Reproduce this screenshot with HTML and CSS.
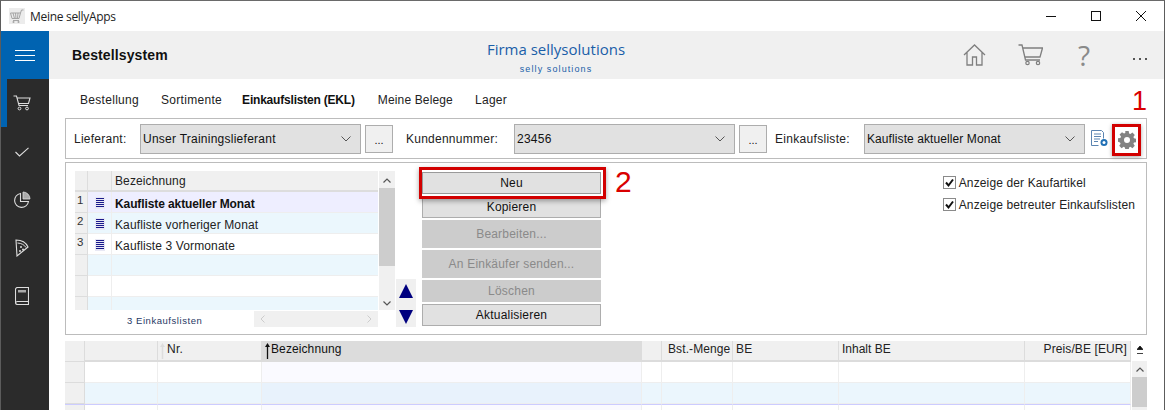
FILE: index.html
```html
<!DOCTYPE html>
<html lang="de">
<head>
<meta charset="utf-8">
<title>Meine sellyApps</title>
<link rel="stylesheet" href="styles.css">
</head>
<body>
<div class="window">
  <div class="titlebar">
    <svg class="app-icon" width="16" height="16" viewBox="0 0 16 16"><rect width="16" height="16" fill="#ececec"/><path d="M1.500 5h10l-1.500 5.500h-7zM11.500 5l1-3h2M4 12.500h6M4 5l1.500 5.500M6.500 5l.5 5.500M9 5l-.5 5.500" fill="none" stroke="#a5a5a5"/><circle cx="4.500" cy="14" r="1" fill="#a5a5a5"/><circle cx="9.500" cy="14" r="1" fill="#a5a5a5"/></svg>
    <span class="app-title">Meine sellyApps</span>
    <div class="win-controls">
      <svg width="12" height="12" viewBox="0 0 12 12"><path d="M1 6.500h10" stroke="#111" fill="none"/></svg>
      <svg width="12" height="12" viewBox="0 0 12 12"><rect x="1.500" y="1.500" width="9" height="9" stroke="#111" fill="none"/></svg>
      <svg width="12" height="12" viewBox="0 0 12 12"><path d="M1 1l10 10M11 1L1 11" stroke="#111" fill="none"/></svg>
    </div>
  </div>
  <div class="app">
    <nav class="sidebar">
      <div class="burger"><span></span><span></span><span></span></div>
      <div class="side-item active"><svg width="18" height="16" viewBox="0 0 18 16"><path d="M.5 1H3.500L6 10.500h9M4 3h13l-1.500 5.500H5.500" fill="none" stroke="#ddd" stroke-width="1.100"/><circle cx="6.500" cy="13.500" r="1.400" fill="none" stroke="#ddd"/><circle cx="14" cy="13.500" r="1.400" fill="none" stroke="#ddd"/></svg></div>
      <div class="side-item"><svg width="14" height="10" viewBox="0 0 14 10"><path d="M.5 5l4 4L13.500.8" fill="none" stroke="#ddd" stroke-width="1.100"/></svg></div>
      <div class="side-item"><svg width="18" height="18" viewBox="0 0 18 18"><path d="M7.500 2.500a7 7 0 1 0 8 8H7.500z" fill="none" stroke="#ddd" stroke-width="1.100"/><path d="M10 1a7 7 0 0 1 7 7h-7z" fill="#aaa" stroke="#ddd" stroke-width=".8"/></svg></div>
      <div class="side-item"><svg width="14" height="18" viewBox="0 0 14 18"><path d="M1 1c5 0 10 2.500 12 7L2 17z" fill="none" stroke="#ddd" stroke-width="1.100"/><path d="M2.500 4c4 .2 7 2 8.500 4.500" fill="none" stroke="#ddd"/><circle cx="6" cy="8" r="1" fill="#ddd"/><circle cx="5" cy="12" r="1" fill="#ddd"/><circle cx="8" cy="10.500" r="1" fill="#ddd"/></svg></div>
      <div class="side-item"><svg width="14" height="18" viewBox="0 0 14 18"><path d="M2.500.5h11v14h-11a2 2 0 0 0-2 1.500V2.500a2 2 0 0 1 2-2zM.5 15.500a2 2 0 0 0 2 2h11v-3" fill="none" stroke="#ddd" stroke-width="1.100"/><rect x="3" y="3" width="8" height="2.500" fill="#aaa"/></svg></div>
    </nav>
    <main class="main">
      <header class="header">
        <div class="h-title">Bestellsystem</div>
        <div class="h-brand"><div class="brand-main">Firma sellysolutions</div><div class="brand-sub">selly solutions</div></div>
        <div class="h-icons">
          <svg width="23" height="22" viewBox="0 0 23 22"><path d="M1 11L11.500 1 22 11M4 8.500V21h5.500v-8h4v8H19V8.500" fill="none" stroke="#7f7f7f" stroke-width="1.300"/></svg>
          <svg width="25" height="22" viewBox="0 0 25 22"><path d="M.5 1H4L7.500 16H22M5 4h19.500l-2.500 9H7" fill="none" stroke="#7f7f7f" stroke-width="1.300"/><circle cx="9.500" cy="19" r="1.700" fill="none" stroke="#7f7f7f" stroke-width="1.200"/><circle cx="20" cy="19" r="1.700" fill="none" stroke="#7f7f7f" stroke-width="1.200"/></svg>
          <span class="help">?</span>
          <span class="more"><i></i><i></i><i></i></span>
        </div>
      </header>
      <div class="tabs">
        <span class="tab">Bestellung</span>
        <span class="tab">Sortimente</span>
        <span class="tab current">Einkaufslisten (EKL)</span>
        <span class="tab belege">Meine Belege</span>
        <span class="tab">Lager</span>
        <span class="mark mark-1">1</span>
      </div>
      <section class="toolbar">
        <label class="lbl lbl-a">Lieferant:</label>
        <div class="combo"><span>Unser Trainingslieferant</span><svg width="10" height="6" viewBox="0 0 10 6"><path d="M.5.500L5 5 9.500.500" fill="none" stroke="#555"/></svg></div>
        <div class="dots">...</div>
        <label class="lbl lbl-b">Kundennummer:</label>
        <div class="combo"><span>23456</span><svg width="10" height="6" viewBox="0 0 10 6"><path d="M.5.500L5 5 9.500.500" fill="none" stroke="#555"/></svg></div>
        <div class="dots">...</div>
        <label class="lbl lbl-c">Einkaufsliste:</label>
        <div class="combo tight"><span>Kaufliste aktueller Monat</span><svg width="10" height="6" viewBox="0 0 10 6"><path d="M.5.500L5 5 9.500.500" fill="none" stroke="#555"/></svg></div>
        <svg class="doc-icon" width="17" height="17" viewBox="0 0 17 17"><path d="M.5.500h10l2 2v6M.5.500v15h7" fill="#fff" stroke="#5b84b1"/><path d="M3 4h7M3 6.500h7M3 9h6M3 11.500h4" stroke="#5b84b1"/><circle cx="13" cy="12.500" r="3.500" fill="#1f6fb5"/><circle cx="13" cy="12.500" r="1.500" fill="#fff"/></svg>
        <div class="gear-box">
          <svg width="18" height="18" viewBox="0 0 18 18"><path fill="#828282" fill-rule="evenodd" d="M7.300 0h3.400l.4 2.400 1.300.6 2-1.400 2.400 2.400-1.400 2 .6 1.300 2.400.4v3.400l-2.400.4-.6 1.300 1.400 2-2.400 2.400-2-1.400-1.300.6-.4 2.400H7.300l-.4-2.400-1.300-.6-2 1.400-2.400-2.400 1.400-2-.6-1.300L0 10.700V7.300l2.400-.4.6-1.300-1.400-2L4 1.200l2 1.400 1.300-.6zM9 6a3 3 0 1 0 0 6 3 3 0 0 0 0-6z"/></svg>
        </div>
      </section>
      <section class="panel">
        <div class="list-wrap">
          <div class="list">
            <div class="lrow lhead"><div class="c-num"></div><div class="c-ico"></div><div class="c-txt">Bezeichnung</div></div>
            <div class="lrow sel"><div class="c-num">1</div><div class="c-ico"><svg class="note" width="10" height="12" viewBox="0 0 10 12"><path d="M1 1.500h8M1 3.500h8M1 5.500h8M1 7.500h8M1 9.500h8" stroke="#1a1a8c"/></svg></div><div class="c-txt strong">Kaufliste aktueller Monat</div></div>
            <div class="lrow alt"><div class="c-num">2</div><div class="c-ico"><svg class="note" width="10" height="12" viewBox="0 0 10 12"><path d="M1 1.500h8M1 3.500h8M1 5.500h8M1 7.500h8M1 9.500h8" stroke="#1a1a8c"/></svg></div><div class="c-txt">Kaufliste vorheriger Monat</div></div>
            <div class="lrow"><div class="c-num">3</div><div class="c-ico"><svg class="note" width="10" height="12" viewBox="0 0 10 12"><path d="M1 1.500h8M1 3.500h8M1 5.500h8M1 7.500h8M1 9.500h8" stroke="#1a1a8c"/></svg></div><div class="c-txt">Kaufliste 3 Vormonate</div></div>
            <div class="lrow alt"><div class="c-num"></div><div class="c-ico"></div><div class="c-txt"></div></div>
            <div class="lrow"><div class="c-num"></div><div class="c-ico"></div><div class="c-txt"></div></div>
            <div class="lrow alt"><div class="c-num"></div><div class="c-ico"></div><div class="c-txt"></div></div>
            <div class="vscroll">
              <svg class="sb-up" width="8" height="5" viewBox="0 0 8 5"><path d="M.5 4.500L4 1l3.500 3.500" fill="none" stroke="#555" stroke-width="1.200"/></svg>
              <div class="thumb"></div>
              <svg class="sb-down" width="8" height="5" viewBox="0 0 8 5"><path d="M.5.500L4 4 7.500.500" fill="none" stroke="#555" stroke-width="1.200"/></svg>
            </div>
          </div>
          <div class="list-foot">
            <span class="count">3 Einkaufslisten</span>
            <div class="hscroll">
              <svg width="5" height="8" viewBox="0 0 5 8"><path d="M4.500.500L1 4l3.500 3.500" fill="none" stroke="#ccc"/></svg>
              <svg width="5" height="8" viewBox="0 0 5 8"><path d="M.5.500L4 4 .5 7.500" fill="none" stroke="#ccc"/></svg>
            </div>
          </div>
        </div>
        <div class="updown">
          <svg width="14" height="14" viewBox="0 0 14 14"><path d="M7 0l7 14H0z" fill="#00007f"/></svg>
          <svg width="14" height="14" viewBox="0 0 14 14"><path d="M0 0h14L7 14z" fill="#00007f"/></svg>
        </div>
        <div class="actions">
          <button class="act act-neu">Neu</button>
          <button class="act">Kopieren</button>
          <button class="act off tall">Bearbeiten...</button>
          <button class="act off tall">An Einkäufer senden...</button>
          <button class="act off">Löschen</button>
          <button class="act">Aktualisieren</button>
          <span class="mark mark-2">2</span>
        </div>
        <div class="checks">
          <div class="chk"><svg width="13" height="13" viewBox="0 0 13 13"><rect x=".5" y=".5" width="12" height="12" fill="#fff" stroke="#8a8a8a"/><path d="M3 6.500l2.500 3L10 3.500" fill="none" stroke="#111" stroke-width="2"/></svg><span>Anzeige der Kaufartikel</span></div>
          <div class="chk"><svg width="13" height="13" viewBox="0 0 13 13"><rect x=".5" y=".5" width="12" height="12" fill="#fff" stroke="#8a8a8a"/><path d="M3 6.500l2.500 3L10 3.500" fill="none" stroke="#111" stroke-width="2"/></svg><span>Anzeige betreuter Einkaufslisten</span></div>
        </div>
      </section>
      <section class="grid-wrap">
        <div class="grid">
          <div class="grow ghead">
            <div class="g0"></div><div class="g1"></div>
            <div class="g2"><svg class="sort" width="5" height="16" viewBox="0 0 5 16"><path d="M2.500 4v12" stroke="#ddd" stroke-width="1.500"/><path d="M2.500 0L5 4H0z" fill="#ddd"/></svg><span>Nr.</span></div>
            <div class="g3 active"><svg class="sort" width="5" height="16" viewBox="0 0 5 16"><path d="M2.500 4v12" stroke="#111" stroke-width="1.300"/><path d="M2.500 0L5 4H0z" fill="#111"/></svg><span>Bezeichnung</span></div>
            <div class="g4"></div><div class="g5">Bst.-Menge</div><div class="g6">BE</div><div class="g7">Inhalt BE</div><div class="g8">Preis/BE [EUR]</div>
          </div>
          <div class="grow"><div class="g0"></div><div class="g1"></div><div class="g2"></div><div class="g3 tint"></div><div class="g4"></div><div class="g5"></div><div class="g6"></div><div class="g7"></div><div class="g8"></div></div>
          <div class="grow alt"><div class="g0"></div><div class="g1"></div><div class="g2"></div><div class="g3 tint"></div><div class="g4"></div><div class="g5"></div><div class="g6"></div><div class="g7"></div><div class="g8"></div></div>
          <div class="grow last"><div class="g0"></div><div class="g1"></div><div class="g2"></div><div class="g3 tint"></div><div class="g4"></div><div class="g5"></div><div class="g6"></div><div class="g7"></div><div class="g8"></div></div>
        </div>
        <div class="grid-scroll">
          <svg class="to-top" width="6" height="8" viewBox="0 0 6 8"><path d="M3 0l3 3.500H0zM0 7.500h6" fill="#111" stroke="#111" stroke-width=".8"/></svg>
          <div class="track">
            <svg width="8" height="5" viewBox="0 0 8 5"><path d="M.5 4.500L4 1l3.500 3.500" fill="none" stroke="#555" stroke-width="1.200"/></svg>
            <div class="g-thumb"></div>
          </div>
        </div>
      </section>
    </main>
  </div>
</div>
</body>
</html>
```
FILE: styles.css
```css
* { box-sizing: border-box; }
html, body { margin: 0; height: 410px; overflow: hidden; background: #fff; }
body { font-family: "Liberation Sans", Arial, sans-serif; font-size: 12px; color: #111; }
.window { height: 410px; border-top: 1px solid #6a6a6a; border-left: 1px solid #5c5c5c; border-right: 1px solid #5c5c5c; display: flex; flex-direction: column; overflow: hidden; }

.titlebar { height: 30px; flex: none; display: flex; align-items: center; padding-left: 8px; background: #fff; }
.app-title { margin-left: 5px; font-family: "Open Sans", "Liberation Sans", sans-serif; font-size: 12px; letter-spacing: -.3px; color: #222; }
.win-controls { margin-left: auto; display: flex; gap: 33px; padding-right: 17px; }

.app { flex: 1; display: flex; min-height: 0; }
.sidebar { width: 48px; flex: none; background: #2b2b2b; display: flex; flex-direction: column; }
.burger { height: 48px; flex: none; background: #0063b1; display: flex; flex-direction: column; gap: 4px; align-items: center; justify-content: center; }
.burger span { width: 20px; height: 1px; background: #fff; display: block; }
.side-item { height: 48px; flex: none; display: flex; align-items: center; justify-content: center; padding: 2px 6px 0 0; }
.side-item.active { border-left: 6px solid #0063b1; padding: 0 12px 0 0; }

.main { flex: 1; min-width: 0; display: flex; flex-direction: column; }
.header { height: 48px; flex: none; background: #f0f0f0; display: grid; grid-template-columns: 380px 254px 1fr; position: relative; }
.h-title { font-weight: 700; font-size: 14px; padding: 16px 0 0 23px; letter-spacing: .12px; color: #111; }
.h-brand { text-align: center; color: #1a5ea8; padding-top: 8px; }
.brand-main { font-family: "Open Sans", "Liberation Sans", sans-serif; font-size: 15px; line-height: 20px; }
.brand-sub { font-size: 9px; letter-spacing: 1.100px; line-height: 12px; margin-top: 4px; }
.h-icons { display: flex; align-items: center; justify-content: flex-end; }
.h-icons svg:first-child { margin-right: 32px; }
.help { font-family: "Open Sans", "Liberation Sans", sans-serif; font-weight: 400; font-size: 28px; color: #8a8a8a; margin-left: 35px; width: 14px; line-height: 30px; }
.more { display: flex; gap: 4px; margin-left: 41px; margin-right: 17px; padding-top: 8px; }
.more i { width: 2px; height: 2px; background: #555; display: block; }

.tabs { height: 39px; flex: none; display: flex; gap: 22px; align-items: center; padding: 3px 0 0 31px; position: relative; letter-spacing: .3px; color: #222; }
.tab.current { font-weight: 700; letter-spacing: -.2px; color: #111; margin-left: -2px; }
.tab.belege { letter-spacing: .15px; margin-left: 1px; }
.mark { position: absolute; color: #d90000; line-height: 1; font-family: "Liberation Sans", sans-serif; }
.mark-1 { font-size: 27px; right: 17px; top: 9px; letter-spacing: 0; }
.mark-2 { font-size: 30px; left: 193px; top: -5px; }

.toolbar { margin-left: 16px; width: 1082px; height: 41px; flex: none; border: 1px solid #bcbcbc; display: flex; align-items: center; padding: 0 0 0 8px; position: relative; }
.lbl { letter-spacing: .25px; color: #222; padding-top: 1px; }
.lbl-a { width: 66px; }
.lbl-b { width: 108px; margin-left: 13px; }
.lbl-c { width: 89px; margin-left: 8px; letter-spacing: .3px; }
.combo { width: 221px; height: 30px; background: #e1e1e1; border: 1px solid #adadad; display: flex; align-items: center; justify-content: space-between; padding: 0 9px 0 2px; letter-spacing: .25px; }
.combo span { padding-top: 1px; }
.combo.tight { letter-spacing: .09px; }
.dots { width: 28px; height: 28px; margin-left: 4px; background: #f0f0f0; border: 1px solid #adadad; text-align: center; line-height: 28px; font-size: 11px; }
.doc-icon { margin-left: 6px; }
.gear-box { position: absolute; left: 1046px; top: 5px; width: 29px; height: 32px; border: 3px solid #d20000; box-shadow: 0 1px 4px rgba(0,0,0,.35); display: flex; align-items: center; justify-content: center; background: #fff; }

.panel { margin: 3px 0 0 16px; width: 1082px; height: 173px; flex: none; border: 1px solid #bcbcbc; padding: 8px 0 0 9px; display: flex; align-items: flex-start; }
.list-wrap { width: 320px; flex: none; }
.list { position: relative; height: 139px; overflow: hidden; padding-right: 17px; }
.lrow { display: flex; height: 21px; background: #fff; }
.lrow.sel { background: #eeeeff; }
.lrow.alt { background: #ebf7fd; }
.lhead { background: #f0f0f0; }
.c-num { width: 13px; flex: none; background: #f0f0f0; border-right: 1px solid #ddd; border-bottom: 1px solid #ddd; padding-left: 2px; font-size: 11.500px; line-height: 17px; color: #333; }
.c-ico { width: 24px; flex: none; border-right: 1px solid #eee; border-bottom: 1px solid #eee; display: flex; align-items: center; justify-content: center; padding-top: 1px; }
.lhead .c-ico { border-right: 1px solid #ddd; border-bottom: 2px solid #ddd; }
.lhead .c-num { border-bottom: 2px solid #ddd; }
.c-txt { flex: 1; line-height: 25px; padding-left: 3px; letter-spacing: .12px; border-bottom: 1px solid #eee; color: #222; overflow: hidden; }
.lhead .c-txt { border-bottom: 2px solid #ddd; line-height: 20px; }
.c-txt.strong { font-weight: 700; letter-spacing: -.1px; color: #111; }
.vscroll { position: absolute; right: 0; top: 0; width: 16px; height: 139px; background: #f0f0f0; display: flex; flex-direction: column; align-items: center; }
.sb-up { position: absolute; top: 7px; }
.thumb { position: absolute; top: 17px; left: 0; width: 16px; height: 78px; background: #cdcdcd; }
.sb-down { position: absolute; bottom: 4px; }
.list-foot { display: flex; height: 17px; margin-top: 1px; }
.count { margin-left: 52px; width: 127px; font-size: 9.500px; line-height: 20px; letter-spacing: .55px; color: #1f3864; }
.hscroll { width: 124px; height: 16px; background: #f0f0f0; display: flex; justify-content: space-between; align-items: center; padding: 0 6px; }

.updown { width: 20px; height: 48px; margin: 108px 0 0 1px; background: #f0f0f0; display: flex; flex-direction: column; align-items: center; justify-content: space-between; padding: 5px 0 3px; flex: none; }
.actions { width: 179px; margin-left: 6px; margin-top: 1px; flex: none; display: flex; flex-direction: column; gap: 2px; position: relative; }
.act { height: 22px; padding: 0; background: #e1e1e1; border: 1px solid #adadad; font: 12px "Liberation Sans", Arial, sans-serif; letter-spacing: .2px; color: #111; }
.act.tall { height: 28px; }
.act.off { background: #cccccc; border-color: #cccccc; color: #8a8a8a; }
.act-neu { position: relative; z-index: 1; border-color: #999; }
.act-neu::after { content: ""; position: absolute; left: -4px; right: -6px; top: -6px; bottom: -6px; border: 3px solid #d20000; box-shadow: 0 2px 5px rgba(0,0,0,.35); }

.checks { margin-left: auto; padding: 5px 11px 0 0; display: flex; flex-direction: column; gap: 9px; }
.chk { display: flex; align-items: center; gap: 3px; height: 13px; letter-spacing: .13px; color: #222; }

.grid-wrap { margin: 6px 0 0 16px; width: 1083px; display: flex; flex: none; }
.grid { width: 1066px; flex: none; }
.grow { display: flex; height: 21px; background: #fff; }
.grow > div { height: 100%; border-right: 1px solid #eee; border-bottom: 1px solid #eee; }
.ghead { height: 21px; background: #f0f0f0; }
.ghead > div { border-bottom: 2px solid #dcdcdc; border-right: 1px solid #dcdcdc; line-height: 17px; letter-spacing: .3px; color: #222; white-space: nowrap; }
.grow.alt { background: #ebf6fd; }
.grow.alt > .g3.tint { background: #e8f2fc; }
.grow.last > div { border-top: 1px solid #ccccff; }
.g0 { width: 20px; flex: none; background: #f0f0f0; border-right: 1px solid #dcdcdc !important; border-bottom: 1px solid #dcdcdc !important; }
.g1 { width: 73px; flex: none; }
.g2 { width: 104px; flex: none; display: flex; align-items: center; gap: 2px; padding-left: 2px; }
.g3 { width: 380px; flex: none; }
.g3.active { background: #dcdcdc; display: flex; align-items: center; gap: 1px; padding-left: 3px; color: #111; letter-spacing: .1px; }
.g2 span, .g3.active span { padding-bottom: 2px; }
.g3.tint { background: #fafaff; }
.g4 { width: 20px; flex: none; }
.g5 { width: 71px; flex: none; padding-left: 6px; letter-spacing: .1px !important; }
.g6 { width: 106px; flex: none; padding-left: 3px; }
.g7 { width: 186px; flex: none; padding-left: 3px; letter-spacing: 0 !important; }
.g8 { width: 106px; flex: none; text-align: right; padding-right: 3px; letter-spacing: .1px !important; }
.grid-scroll { width: 17px; flex: none; display: flex; flex-direction: column; align-items: flex-start; }
.to-top { margin: 5px 0 0 6px; }
.track { margin: 7px 0 0 1px; width: 15px; height: 60px; background: #f0f0f0; display: flex; flex-direction: column; align-items: center; padding-top: 6px; }
.g-thumb { width: 15px; height: 30px; background: #cdcdcd; margin-top: 5px; }
.sort { flex: none; }
.note { display: block; background: #e8e8f4; }
```
